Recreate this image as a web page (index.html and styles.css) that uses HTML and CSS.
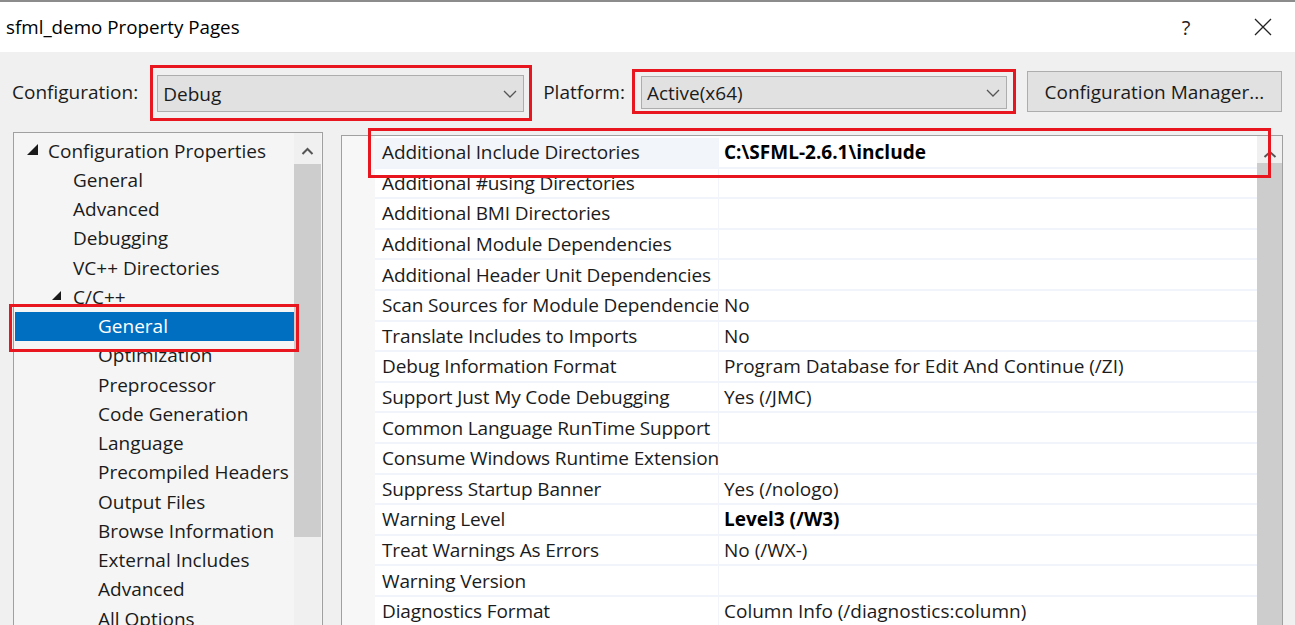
FILE: index.html
```html
<!DOCTYPE html>
<html>
<head>
<meta charset="utf-8">
<link rel="stylesheet" href="styles.css">
</head>
<body>
<div class="window">
  <div class="titlebar">
    <span class="title">sfml_demo Property Pages</span>
    <div class="tb-buttons">
      <span class="help">?</span>
      <svg class="close" width="18" height="18" viewBox="0 0 18 18"><path d="M1 1L17 17M17 1L1 17" stroke="#222" stroke-width="1.3" fill="none"/></svg>
    </div>
  </div>
  <div class="client">
    <div class="config-row">
      <span class="lbl">Configuration:</span>
      <div class="mark mark-config">
        <div class="combo"><span>Debug</span><svg class="chev" width="14" height="8" viewBox="0 0 14 8"><path d="M1 1L7 7L13 1" stroke="#555" stroke-width="1.3" fill="none"/></svg></div>
      </div>
      <span class="lbl lbl-platform">Platform:</span>
      <div class="mark mark-platform">
        <div class="combo"><span>Active(x64)</span><svg class="chev" width="14" height="8" viewBox="0 0 14 8"><path d="M1 1L7 7L13 1" stroke="#555" stroke-width="1.3" fill="none"/></svg></div>
      </div>
      <button class="btn">Configuration Manager...</button>
    </div>
    <div class="main">
      <div class="tree-panel">
        <ul class="tree">
          <li class="l1"><svg class="tri" width="11" height="11" viewBox="0 0 11 11"><polygon points="11,0 11,11 0,11" fill="#1a1a1a"/></svg>Configuration Properties</li>
          <li class="l2">General</li>
          <li class="l2">Advanced</li>
          <li class="l2">Debugging</li>
          <li class="l2">VC++ Directories</li>
          <li class="l2 exp"><svg class="tri" width="9" height="9" viewBox="0 0 9 9"><polygon points="9,0 9,9 0,9" fill="#1a1a1a"/></svg>C/C++</li>
          <li class="l3 sel">General</li>
          <li class="l3">Optimization</li>
          <li class="l3">Preprocessor</li>
          <li class="l3">Code Generation</li>
          <li class="l3">Language</li>
          <li class="l3">Precompiled Headers</li>
          <li class="l3">Output Files</li>
          <li class="l3">Browse Information</li>
          <li class="l3">External Includes</li>
          <li class="l3">Advanced</li>
          <li class="l3">All Options</li>
        </ul>
        <div class="vscroll tree-scroll">
          <svg class="up" width="13" height="8" viewBox="0 0 13 8"><path d="M1.5 7L6.5 2L11.5 7" stroke="#555" stroke-width="2" fill="none"/></svg>
          <div class="thumb tree-thumb"></div>
        </div>
        <div class="hl hl-tree"></div>
      </div>
      <div class="grid-panel">
        <div class="gutter"></div>
        <div class="grid">
          <div class="row first"><div class="name">Additional Include Directories</div><div class="val b">C:\SFML-2.6.1\include</div></div>
          <div class="row"><div class="name">Additional #using Directories</div><div class="val"></div></div>
          <div class="row"><div class="name">Additional BMI Directories</div><div class="val"></div></div>
          <div class="row"><div class="name">Additional Module Dependencies</div><div class="val"></div></div>
          <div class="row"><div class="name">Additional Header Unit Dependencies</div><div class="val"></div></div>
          <div class="row"><div class="name">Scan Sources for Module Dependencies</div><div class="val">No</div></div>
          <div class="row"><div class="name">Translate Includes to Imports</div><div class="val">No</div></div>
          <div class="row"><div class="name">Debug Information Format</div><div class="val">Program Database for Edit And Continue (/ZI)</div></div>
          <div class="row"><div class="name">Support Just My Code Debugging</div><div class="val">Yes (/JMC)</div></div>
          <div class="row"><div class="name">Common Language RunTime Support</div><div class="val"></div></div>
          <div class="row"><div class="name">Consume Windows Runtime Extension</div><div class="val"></div></div>
          <div class="row"><div class="name">Suppress Startup Banner</div><div class="val">Yes (/nologo)</div></div>
          <div class="row"><div class="name">Warning Level</div><div class="val b">Level3 (/W3)</div></div>
          <div class="row"><div class="name">Treat Warnings As Errors</div><div class="val">No (/WX-)</div></div>
          <div class="row"><div class="name">Warning Version</div><div class="val"></div></div>
          <div class="row"><div class="name">Diagnostics Format</div><div class="val">Column Info (/diagnostics:column)</div></div>
        </div>
        <div class="vscroll grid-scroll">
          <svg class="up" width="14" height="8" viewBox="0 0 14 8"><path d="M1.5 7L7 2L12.5 7" stroke="#555" stroke-width="2" fill="none"/></svg>
          <div class="thumb grid-thumb"></div>
        </div>
        <div class="hl hl-grid"></div>
      </div>
    </div>
  </div>
</div>
</body>
</html>
```
FILE: styles.css
```css
* { box-sizing: border-box; }
html, body { margin: 0; padding: 0; }
body {
  width: 1295px;
  height: 625px;
  overflow: hidden;
  font-family: "Open Sans", "Noto Sans", sans-serif;
  font-size: 19px;
  color: #1b1b1b;
  background: #f0f0f0;
}
.window {
  width: 1295px;
  height: 625px;
  border-top: 2px solid #8c8c8c;
  display: flex;
  flex-direction: column;
}
.titlebar {
  height: 50px;
  flex: none;
  background: #ffffff;
  display: flex;
  align-items: center;
  justify-content: space-between;
  padding-left: 6px;
}
.title { font-size: 18.8px; color: #000; }
.tb-buttons {
  display: flex;
  align-items: center;
  height: 100%;
}
.help {
  font-size: 20px;
  color: #222;
  width: 20px;
  text-align: center;
  margin-right: 58px;
}
.close { margin-right: 23px; }
.client {
  flex: 1;
  display: flex;
  flex-direction: column;
  background: #f0f0f0;
  min-height: 0;
}
.config-row {
  height: 80px;
  flex: none;
  display: flex;
  align-items: center;
  padding-left: 12px;
}
.lbl { white-space: nowrap; }
.mark {
  border: 3px solid #e8161f;
  flex: none;
}
.mark-config {
  width: 382px;
  margin-left: 12px;
  padding: 7px 5px 6px 4px;
  margin-top: 2px;
}
.lbl-platform { margin-left: 11px; }
.mark-platform {
  width: 384px;
  margin-left: 7px;
  padding: 4px 6px 2px 6px;
  margin-top: -1px;
}
.combo {
  background: #e1e1e1;
  border: 1px solid #adadad;
  display: flex;
  align-items: center;
  justify-content: space-between;
  padding: 0 6px 0 5px;
}
.mark-config .combo { height: 37px; }
.mark-platform .combo { height: 33px; }
.chev { margin-top: 1px; }
.btn {
  margin-left: 11px;
  width: 255px;
  height: 41px;
  background: #e1e1e1;
  border: 1px solid #adadad;
  font-family: inherit;
  font-size: 19px;
  color: #1b1b1b;
  padding: 0;
  margin-top: -1px;
}
.main {
  flex: 1;
  display: flex;
  align-items: flex-start;
  min-height: 0;
}
.tree-panel {
  position: relative;
  margin-left: 13px;
  width: 310px;
  height: 520px;
  border: 1px solid #a0a0a0;
  background: #f5f5f5;
  display: flex;
}
.tree {
  list-style: none;
  margin: 0;
  padding: 3px 0 0 1px;
  flex: 1;
  min-width: 0;
  overflow: hidden;
}
.tree li {
  height: 29.25px;
  display: flex;
  align-items: center;
  white-space: nowrap;
}
.tree .l1 { padding-left: 12px; }
.tree .l1 .tri { margin-right: 10px; margin-top: -3px; }
.tree .l2 { padding-left: 58px; }
.tree .exp { padding-left: 37px; }
.tree .exp .tri { margin-right: 12px; margin-top: -3px; }
.tree .l3 { padding-left: 83px; }
.tree .sel {
  background: #006fc1;
  color: #fff;
}
.vscroll {
  position: relative;
  flex: none;
  display: flex;
  flex-direction: column;
  align-items: center;
  background: #f0f0f0;
}
.tree-scroll { width: 27px; margin-right: 1px; }
.up { margin-top: 14px; }
.thumb { background: #cdcdcd; width: 100%; }
.tree-thumb { margin-top: 9px; height: 373px; }
.grid-panel {
  position: relative;
  margin-left: 18px;
  margin-top: 3px;
  width: 942px;
  height: 520px;
  border: 1px solid #a0a0a0;
  border-bottom: none;
  background: #f7f7f7;
  display: flex;
}
.gutter { width: 33px; flex: none; }
.grid {
  width: 882px;
  flex: none;
  background: #fff;
  padding-top: 2px;
}
.row {
  height: 30.6px;
  display: grid;
  grid-template-columns: 344px 538px;
  border-bottom: 2px solid #f1f5fb;
}
.row .name, .row .val {
  display: flex;
  align-items: center;
  padding-left: 7px;
  white-space: nowrap;
  overflow: hidden;
}
.row .name { border-right: 1px solid #f1f5fb; letter-spacing: -0.12px; }
.row .val { padding-left: 5px; }
.row.first .name { background: #f2f5fa; }
.b { font-weight: 700; color: #000; }
.grid-scroll { width: 25px; background: #f0f0f0; }
.grid-scroll .up { margin-top: 14px; }
.grid-thumb { margin-top: 5px; flex: 1; }
.hl {
  position: absolute;
  border: 3px solid #e8161f;
  pointer-events: none;
}
.hl-tree { left: -5px; top: 171px; width: 290px; height: 48px; }
.hl-grid { left: 26px; top: -8px; width: 903px; height: 50px; }
```
